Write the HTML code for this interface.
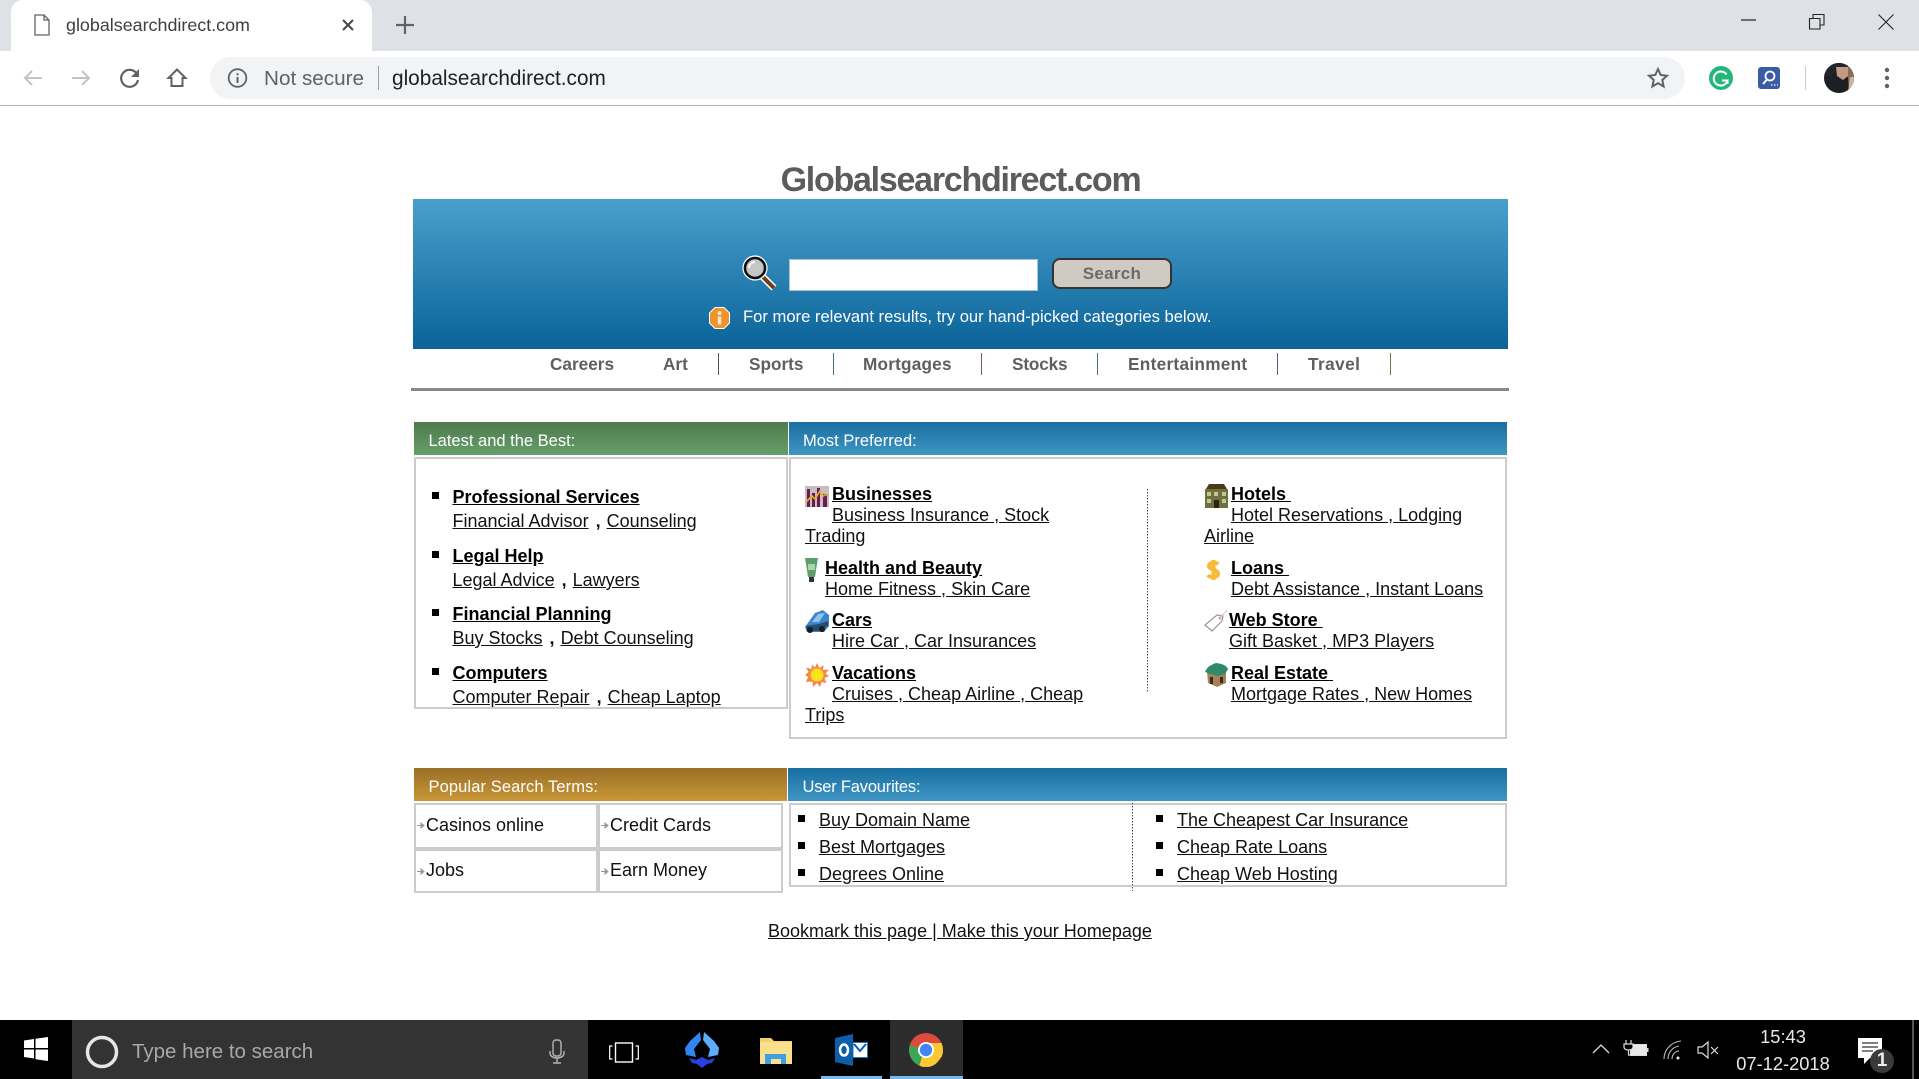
<!DOCTYPE html>
<html><head><meta charset="utf-8"><title>globalsearchdirect.com</title>
<style>
html,body{margin:0;padding:0;width:1919px;height:1079px;overflow:hidden;background:#fff;font-family:"Liberation Sans",sans-serif;color:#000}
.a{position:absolute}
.t{position:absolute;white-space:nowrap;line-height:20px;font-size:18px;color:#111}
.t a{color:#111;text-decoration:underline}
.b{font-weight:bold;color:#000}
.b a{color:#000}
.c{margin:0 6px 0 7px;font-weight:bold}
.hd{position:absolute;height:33px;line-height:39px;color:#fff;font-size:16.5px;box-sizing:border-box;padding-left:14.5px}
.box{position:absolute;box-sizing:border-box;border:2px solid #ccc;background:#fff}
.sq{position:absolute;width:7px;height:7px;background:#000}
.nav{position:absolute;top:354px;line-height:21px;font-size:17.2px;font-weight:bold;color:#5f5f5f;white-space:nowrap}
.sp{position:absolute;top:353px;width:1px;height:22px;background:#555}
.dot{position:absolute;width:1px;background:repeating-linear-gradient(#444 0 1.5px,#fff 1.5px 3px)}
svg{position:absolute;overflow:visible}
</style></head><body>

<!-- browser chrome -->
<div class="a" style="left:0;top:0;width:1919px;height:51px;background:#dee1e6"></div>
<div class="a" style="left:11px;top:0;width:361px;height:51px;background:#fff;border-radius:12px 12px 0 0"></div>
<div class="a" style="left:0;top:51px;width:1919px;height:54px;background:#fff"></div>
<div class="a" style="left:0;top:105px;width:1919px;height:1px;background:#b4b4b4"></div>
<svg style="left:34px;top:14px" width="16" height="22" viewBox="0 0 16 22"><path d="M1 1h9l5 5v15H1z M10 1v5h5" fill="#fff" stroke="#5f6368" stroke-width="1.3"/></svg>
<div class="t" style="left:66px;top:15px;font-size:17.9px;color:#3c4043">globalsearchdirect.com</div>
<svg style="left:342px;top:19px" width="12" height="12" viewBox="0 0 12 12"><path d="M1 1l10 10M11 1L1 11" stroke="#444" stroke-width="2"/></svg>
<svg style="left:396px;top:16px" width="18" height="18" viewBox="0 0 18 18"><path d="M9 0v18M0 9h18" stroke="#5f6368" stroke-width="2.2"/></svg>
<svg style="left:1741px;top:19px" width="16" height="2"><path d="M0 1h15" stroke="#222" stroke-width="1.2"/></svg>
<svg style="left:1809px;top:14px" width="16" height="16" viewBox="0 0 16 16"><path d="M.5 4.5h10.5v10.500H.5z M4 4.500V.5h11v10.500h-4" fill="none" stroke="#222" stroke-width="1.1"/></svg>
<svg style="left:1878px;top:14px" width="16" height="16" viewBox="0 0 16 16"><path d="M.5.5l15 15M15.500.5l-15 15" stroke="#222" stroke-width="1.1"/></svg>

<svg style="left:22px;top:68px" width="22" height="20" viewBox="0 0 22 20"><path d="M20 10H3M10 3l-7 7 7 7" fill="none" stroke="#c1c3c6" stroke-width="2"/></svg>
<svg style="left:70px;top:68px" width="22" height="20" viewBox="0 0 22 20"><path d="M2 10h17M12 3l7 7-7 7" fill="none" stroke="#c1c3c6" stroke-width="2"/></svg>
<svg style="left:119px;top:67px" width="22" height="22" viewBox="0 0 22 22"><path d="M18 7A8.500 8.500 0 1 0 19 13" fill="none" stroke="#5f6368" stroke-width="2.200"/><path d="M20 2v8h-8z" fill="#5f6368"/></svg>
<svg style="left:167px;top:68px" width="20" height="20" viewBox="0 0 20 20"><path d="M10 1.500L1.500 10H4.500v8h11v-8h3z" fill="none" stroke="#5f6368" stroke-width="2"/></svg>

<div class="a" style="left:210px;top:57px;width:1475px;height:42px;background:#f1f3f4;border-radius:21px"></div>
<svg style="left:227px;top:68px" width="21" height="21" viewBox="0 0 21 21"><circle cx="10.500" cy="10" r="8.800" fill="none" stroke="#5f6368" stroke-width="1.800"/><path d="M10.500 9v6M10.500 5.200v2" stroke="#5f6368" stroke-width="2"/></svg>
<div class="t" style="left:264px;top:69px;font-size:20.700px;color:#5f6368">Not secure</div>
<div class="a" style="left:378px;top:66px;width:1px;height:24px;background:#9aa0a6"></div>
<div class="t" style="left:392px;top:69px;font-size:20.800px;color:#202124">globalsearchdirect.com</div>
<svg style="left:1647px;top:67px" width="22" height="22" viewBox="0 0 22 22"><path d="M11 2l2.700 6 6.300.7-4.700 4.300 1.300 6.500L11 16.200 5.400 19.500 6.700 13 2 8.700 8.300 8z" fill="none" stroke="#5f6368" stroke-width="2"/></svg>
<svg style="left:1709px;top:66px" width="24" height="24" viewBox="0 0 24 24"><circle cx="12" cy="12" r="12" fill="#25b67a"/><path d="M17.500 8.500A7 7 0 1 0 18.500 14.500H13M18.500 14.500v3.500" fill="none" stroke="#fff" stroke-width="2"/></svg>
<svg style="left:1758px;top:67px" width="22" height="22" viewBox="0 0 22 22"><rect width="22" height="22" rx="3" fill="#3c5ba6"/><circle cx="12" cy="9" r="4.500" fill="none" stroke="#fff" stroke-width="1.800"/><path d="M9 12.500L5 17" stroke="#fff" stroke-width="2"/><path d="M13 18h1.500M16 18h1.500M19 18h1" stroke="#d8e0f0" stroke-width="1.500"/></svg>
<div class="a" style="left:1805px;top:66px;width:1px;height:24px;background:#ccc"></div>
<svg style="left:1824px;top:63px" width="30" height="30" viewBox="0 0 30 30"><defs><clipPath id="av"><circle cx="15" cy="15" r="15"/></clipPath></defs><g clip-path="url(#av)"><rect width="30" height="30" fill="#1c2024"/><path d="M10 0h14l6 12v18h-5l-1-16-6-2z" fill="#8a6a58"/><path d="M12 4h12v9l-5 4-6-4z" fill="#c49a82"/><path d="M26 14h4v16h-6z" fill="#c9b49c"/><path d="M8 0h16v4H12L8 14 0 12z" fill="#20262a"/></g></svg>
<svg style="left:1884px;top:67px" width="6" height="22" viewBox="0 0 6 22"><circle cx="3" cy="3" r="2.200" fill="#5f6368"/><circle cx="3" cy="11" r="2.200" fill="#5f6368"/><circle cx="3" cy="19" r="2.200" fill="#5f6368"/></svg>

<!-- title and banner -->
<div class="t" style="left:0;width:1921px;text-align:center;top:160px;line-height:40px;font-size:34px;font-weight:bold;letter-spacing:-1.25px;color:#5c5c5c">Globalsearchdirect.com</div>
<div class="a" style="left:413px;top:199px;width:1095px;height:150px;background:linear-gradient(#4a9fcc,#0a6399)"></div>
<svg style="left:743px;top:256px" width="36" height="34" viewBox="0 0 36 34"><path d="M19 20l12 12" stroke="#fff" stroke-width="7"/><path d="M20 21l11 11" stroke="#6b3f1d" stroke-width="4"/><circle cx="12" cy="12" r="10" fill="#c6c6c6" stroke="#111" stroke-width="2.500"/><circle cx="12" cy="12" r="12" fill="none" stroke="#fff" stroke-width="1.200"/><path d="M6 12a6 6 0 0 1 6-6" stroke="#f4f4f4" stroke-width="2" fill="none"/></svg>
<div class="a" style="left:789px;top:259px;width:249px;height:32px;box-sizing:border-box;background:#fff;border:1px solid #a9c4d4"></div>
<div class="a" style="left:1052px;top:258px;width:120px;height:31px;box-sizing:border-box;background:#cfcac2;border:2px solid #333;border-radius:8px;text-align:center;line-height:28px;font-size:17px;font-weight:bold;color:#6a6a6a;letter-spacing:.3px">Search</div>
<svg style="left:709px;top:307px" width="21" height="22" viewBox="0 0 21 22"><path d="M6 .5h9L20.500 6v10L15 21.500H6L.5 16V6z" fill="#f0932b" stroke="#fff" stroke-width="1"/><circle cx="10.500" cy="6" r="2" fill="#fbe9cf"/><path d="M10.500 9.500v8" stroke="#fbe9cf" stroke-width="3.500"/></svg>
<div class="t" style="left:743px;top:307px;font-size:16.600px;color:#fff">For more relevant results, try our hand-picked categories below.</div>

<!-- nav -->
<div class="nav" style="left:550px">Careers</div>
<div class="nav" style="left:663px">Art</div>
<div class="sp" style="left:718px"></div>
<div class="nav" style="left:749px">Sports</div>
<div class="sp" style="left:833px;background:#3d6f7c"></div>
<div class="nav" style="left:863px;letter-spacing:.2px">Mortgages</div>
<div class="sp" style="left:981px;background:#7c5a4d"></div>
<div class="nav" style="left:1012px;letter-spacing:-.15px">Stocks</div>
<div class="sp" style="left:1097px;background:#3d6f7c"></div>
<div class="nav" style="left:1128px;letter-spacing:.3px">Entertainment</div>
<div class="sp" style="left:1277px;background:#4d5f7c"></div>
<div class="nav" style="left:1308px;letter-spacing:.45px">Travel</div>
<div class="sp" style="left:1390px;background:#6f7c3d"></div>
<div class="a" style="left:411px;top:388px;width:1098px;height:3px;background:#888"></div>

<!-- section one -->
<div class="hd" style="left:414px;top:422px;width:374px;background:linear-gradient(#4e7a4c,#659f6a)">Latest and the Best:</div>
<div class="hd" style="left:789px;top:422px;width:718px;padding-left:14px;background:linear-gradient(#186ea0,#3f96c4)">Most Preferred:</div>
<div class="box" style="left:414px;top:457px;width:374px;height:252px"></div>
<div class="box" style="left:789px;top:457px;width:718px;height:282px"></div>

<div class="sq" style="left:432px;top:492px"></div>
<div class="t b" style="left:452.5px;top:487px"><a href="#">Professional Services</a></div>
<div class="t" style="left:452.5px;top:511px"><a href="#">Financial Advisor</a><span class="c">,</span><a href="#">Counseling</a></div>
<div class="sq" style="left:432px;top:551px"></div>
<div class="t b" style="left:452.5px;top:546px"><a href="#">Legal Help</a></div>
<div class="t" style="left:452.5px;top:570px"><a href="#">Legal Advice</a><span class="c">,</span><a href="#">Lawyers</a></div>
<div class="sq" style="left:432px;top:609px"></div>
<div class="t b" style="left:452.5px;top:604px"><a href="#">Financial Planning</a></div>
<div class="t" style="left:452.5px;top:628px"><a href="#">Buy Stocks</a><span class="c">,</span><a href="#">Debt Counseling</a></div>
<div class="sq" style="left:432px;top:668px"></div>
<div class="t b" style="left:452.5px;top:663px"><a href="#">Computers</a></div>
<div class="t" style="left:452.5px;top:687px"><a href="#">Computer Repair</a><span class="c">,</span><a href="#">Cheap Laptop</a></div>

<!-- preferred left -->
<svg style="left:805px;top:485px" width="24" height="22" viewBox="0 0 24 22"><rect y="1" width="24" height="21" fill="#c8bcc4"/><path d="M2 4h3v18H2zM7 8h3v14H7zM12 3h3v19h-3zM18 9h4v13h-4z" fill="#6d1a4e"/><path d="M1 17l6-6 3 3 5-8 3 5 5-2" fill="none" stroke="#e6b422" stroke-width="1.600"/></svg>
<div class="t b" style="left:832px;top:484px"><a href="#">Businesses</a></div>
<div class="t" style="left:832px;top:505px"><a href="#">Business Insurance&nbsp;</a>,<a href="#">&nbsp;Stock</a></div>
<div class="t" style="left:805px;top:526px"><a href="#">Trading</a></div>

<svg style="left:805px;top:558px" width="13" height="24" viewBox="0 0 13 24"><path d="M0 0h13l-1 6-2 13H3L1 6z" fill="#5c9e6a"/><path d="M3 6h7v6H3z" fill="#a9d2b2"/><rect x="4" y="19" width="5" height="5" fill="#333"/></svg>
<div class="t b" style="left:825px;top:558px"><a href="#">Health and Beauty</a></div>
<div class="t" style="left:825px;top:579px"><a href="#">Home Fitness&nbsp;</a>,<a href="#">&nbsp;Skin Care</a></div>

<svg style="left:805px;top:610px" width="24" height="23" viewBox="0 0 24 23"><path d="M0 17L10 3l8-3 6 5v11l-5 6H2z" fill="#3a86c8"/><path d="M7 12l6-8 7-1-6 9z" fill="#8cc4ec"/><path d="M1 16l13-2 9-3v5l-9 5H2z" fill="#274a6e"/><circle cx="5" cy="20" r="3" fill="#1c1c1c"/><circle cx="17" cy="19" r="3" fill="#1c1c1c"/></svg>
<div class="t b" style="left:832px;top:610px"><a href="#">Cars</a></div>
<div class="t" style="left:832px;top:631px"><a href="#">Hire Car&nbsp;</a>,<a href="#">&nbsp;Car Insurances</a></div>

<svg style="left:805px;top:663px" width="24" height="24" viewBox="0 0 24 24"><path d="M12 0l2.500 5 4-3-.5 5 6-.5-3.500 4 3.500 2.500-4.500 2 2 5-5-1-1.500 5-3-4-4 4-.5-5.500L1 19l2-5-3-2 3.500-3L1 4.500 6.500 6 7 1.500l3 3z" fill="#f4874c"/><circle cx="12" cy="12" r="6.500" fill="#ffe21a"/></svg>
<div class="t b" style="left:832px;top:663px"><a href="#">Vacations</a></div>
<div class="t" style="left:832px;top:684px"><a href="#">Cruises&nbsp;</a>,<a href="#">&nbsp;Cheap Airline&nbsp;</a>,<a href="#">&nbsp;Cheap</a></div>
<div class="t" style="left:805px;top:705px"><a href="#">Trips</a></div>

<div class="dot" style="left:1147px;top:489px;height:204px"></div>

<!-- preferred right -->
<svg style="left:1204px;top:484px" width="25" height="24" viewBox="0 0 25 24"><path d="M2 5L5 0h15l3 5z" fill="#4a3a1c"/><rect x="1" y="5" width="23" height="19" fill="#6f7040"/><path d="M3 8h4v4H3zM10 8h4v4h-4zM18 8h4v4h-4zM3 15h4v4H3zM18 15h4v4h-4z" fill="#c8c48e"/><rect x="10" y="16" width="5" height="8" fill="#2d2410"/></svg>
<div class="t b" style="left:1231px;top:484px"><a href="#">Hotels&nbsp;</a></div>
<div class="t" style="left:1231px;top:505px"><a href="#">Hotel Reservations&nbsp;</a>,<a href="#">&nbsp;Lodging</a></div>
<div class="t" style="left:1204px;top:526px"><a href="#">Airline</a></div>

<svg style="left:1206px;top:559px" width="14" height="22" viewBox="0 0 14 22"><path d="M12 5.500C10 3 3 3 3 7c0 4 9 3 9 8 0 4-8 4-10 1M7.500 1v20" fill="none" stroke="#fbb45a" stroke-width="4"/><path d="M12 5.500C10 3 3 3 3 7c0 4 9 3 9 8 0 4-8 4-10 1M7.500 1v20" fill="none" stroke="#f5c020" stroke-width="2"/></svg>
<div class="t b" style="left:1231px;top:558px"><a href="#">Loans&nbsp;</a></div>
<div class="t" style="left:1231px;top:579px"><a href="#">Debt Assistance&nbsp;</a>,<a href="#">&nbsp;Instant Loans</a></div>

<svg style="left:1203px;top:610px" width="25" height="22" viewBox="0 0 25 22"><path d="M2 15L14 5l6 1-1 5-10 10z" fill="#fff" stroke="#999" stroke-width="1.200"/><circle cx="17" cy="8" r="1.500" fill="#e8a070"/><path d="M17 8L24 0" stroke="#ccc" stroke-width="1"/></svg>
<div class="t b" style="left:1229px;top:610px"><a href="#">Web Store&nbsp;</a></div>
<div class="t" style="left:1229px;top:631px"><a href="#">Gift Basket&nbsp;</a>,<a href="#">&nbsp;MP3 Players</a></div>

<svg style="left:1205px;top:663px" width="23" height="24" viewBox="0 0 23 24"><path d="M2 8h19v12l-9 4-9-4z" fill="#a5805a"/><path d="M0 9Q2 3 11 0q10 1 12 6l-3 5-8 2z" fill="#2f8a6c"/><path d="M5 14h3v7H5zM15 14h3v6h-3z" fill="#3a2a18"/></svg>
<div class="t b" style="left:1231px;top:663px"><a href="#">Real Estate&nbsp;</a></div>
<div class="t" style="left:1231px;top:684px"><a href="#">Mortgage Rates&nbsp;</a>,<a href="#">&nbsp;New Homes</a></div>

<!-- section two -->
<div class="hd" style="left:414px;top:768px;width:373px;letter-spacing:.1px;background:linear-gradient(#9a7028,#c99636)">Popular Search Terms:</div>
<div class="hd" style="left:788px;top:768px;width:719px;letter-spacing:-.2px;background:linear-gradient(#186ea0,#3f96c4)">User Favourites:</div>
<div class="box" style="left:414px;top:803px;width:184px;height:46px"></div>
<div class="box" style="left:598px;top:803px;width:185px;height:46px"></div>
<div class="box" style="left:414px;top:849px;width:184px;height:44px"></div>
<div class="box" style="left:598px;top:849px;width:185px;height:44px"></div>
<svg style="left:417px;top:822px" width="9" height="7"><path d="M0 3.500h6M4 1l3 2.500L4 6z" fill="#999" stroke="#999"/></svg>
<svg style="left:601px;top:822px" width="9" height="7"><path d="M0 3.500h6M4 1l3 2.500L4 6z" fill="#999" stroke="#999"/></svg>
<svg style="left:417px;top:868px" width="9" height="7"><path d="M0 3.500h6M4 1l3 2.500L4 6z" fill="#999" stroke="#999"/></svg>
<svg style="left:601px;top:868px" width="9" height="7"><path d="M0 3.500h6M4 1l3 2.500L4 6z" fill="#999" stroke="#999"/></svg>
<div class="t" style="left:426px;top:815px">Casinos online</div>
<div class="t" style="left:610px;top:815px">Credit Cards</div>
<div class="t" style="left:426px;top:860px">Jobs</div>
<div class="t" style="left:610px;top:860px">Earn Money</div>

<div class="box" style="left:789px;top:803px;width:718px;height:84px"></div>
<div class="dot" style="left:1132px;top:803px;height:88px"></div>
<div class="sq" style="left:798px;top:815px"></div>
<div class="t" style="left:819px;top:810px"><a href="#">Buy Domain Name</a></div>
<div class="sq" style="left:798px;top:842px"></div>
<div class="t" style="left:819px;top:837px"><a href="#">Best Mortgages</a></div>
<div class="sq" style="left:798px;top:869px"></div>
<div class="t" style="left:819px;top:864px"><a href="#">Degrees Online</a></div>
<div class="sq" style="left:1156px;top:815px"></div>
<div class="t" style="left:1177px;top:810px"><a href="#">The Cheapest Car Insurance</a></div>
<div class="sq" style="left:1156px;top:842px"></div>
<div class="t" style="left:1177px;top:837px"><a href="#">Cheap Rate Loans</a></div>
<div class="sq" style="left:1156px;top:869px"></div>
<div class="t" style="left:1177px;top:864px"><a href="#">Cheap Web Hosting</a></div>

<div class="t" style="left:768px;top:921px"><a href="#">Bookmark this page | Make this your Homepage</a></div>

<!-- taskbar -->
<div class="a" style="left:0;top:1020px;width:1919px;height:59px;background:#000"></div>
<div class="a" style="left:72px;top:1020px;width:516px;height:59px;background:#333"></div>
<svg style="left:24px;top:1037px" width="24" height="24" viewBox="0 0 24 24"><path d="M0 3.500L10 2v9H0zM11.500 1.800L24 0v11H11.500zM0 12.500h10v9L0 20zM11.500 12.500H24V24l-12.500-1.800z" fill="#fff"/></svg>
<svg style="left:85px;top:1035px" width="34" height="34" viewBox="0 0 34 34"><circle cx="17" cy="17" r="14.500" fill="none" stroke="#e6e6e6" stroke-width="3.500"/></svg>
<div class="t" style="left:132px;top:1042px;font-size:20.500px;color:#a8a8a8">Type here to search</div>
<svg style="left:548px;top:1039px" width="18" height="26" viewBox="0 0 18 26"><rect x="5" y="1" width="8" height="16" rx="3" fill="none" stroke="#b5b5b5" stroke-width="1.400"/><path d="M2 12v2c0 3 3 5 7 5s7-2 7-5v-2M9 19v5M5 24h8" fill="none" stroke="#b5b5b5" stroke-width="1.400"/></svg>
<svg style="left:609px;top:1042px" width="30" height="22" viewBox="0 0 30 22"><rect x="6.500" y="1" width="17" height="19" fill="none" stroke="#fff" stroke-width="1.400"/><path d="M3.500 4H.7v13h2.800M26.500 4h2.800v13h-2.800" fill="none" stroke="#fff" stroke-width="1.200"/></svg>

<svg style="left:685px;top:1032px" width="34" height="36" viewBox="0 0 34 36"><path d="M15 0L5 9 0 16l1 7 10 2-2-8 7-9z" fill="#2f86f0"/><path d="M19 0l10 9 5 7-1 7-10 2 2-8-7-9z" fill="#5aaef8"/><path d="M4 26l7 2 6-3 6 3 7-2-3 5-5 1-5 4-5-4-5-1z" fill="#2a3fe0"/></svg>
<svg style="left:760px;top:1038px" width="32" height="26" viewBox="0 0 32 26"><path d="M0 0h11l3 3h18v23H0z" fill="#f5cf6b"/><rect x="0" y="4" width="32" height="22" fill="#fbe08c"/><path d="M5 16h21v10h-5v-5H11v5H5z" fill="#3f9fe0"/></svg>
<svg style="left:835px;top:1034px" width="33" height="32" viewBox="0 0 33 32"><path d="M0 4L18 0v32L0 28z" fill="#0a5fa8"/><rect x="18" y="8" width="15" height="16" fill="#1e7ec8"/><path d="M18.500 9h13.500v14H18.500z" fill="#fff"/><path d="M19 10l6 7 6-7" fill="none" stroke="#0a5fa8" stroke-width="2"/><ellipse cx="9" cy="16" rx="4" ry="5.500" fill="none" stroke="#fff" stroke-width="2.600"/></svg>
<div class="a" style="left:821px;top:1076px;width:61px;height:3px;background:#76b9ed"></div>
<div class="a" style="left:890px;top:1020px;width:73px;height:59px;background:#2c2c2c"></div>
<div class="a" style="left:890px;top:1076px;width:73px;height:3px;background:#76b9ed"></div>
<svg style="left:909px;top:1033px" width="34" height="34" viewBox="0 0 34 34"><defs><clipPath id="ch"><circle cx="17" cy="17" r="17"/></clipPath></defs><g clip-path="url(#ch)"><rect width="34" height="34" fill="#dd4b3e"/><path d="M17 17L0 12V34H14z" fill="#3aa757"/><path d="M17 17L34 34H12z" fill="#3aa757"/><path d="M17 10h17v12L24 34H10z" fill="#fcc934"/></g><circle cx="17" cy="17" r="8" fill="#fff"/><circle cx="17" cy="17" r="6.200" fill="#4285f4"/></svg>

<svg style="left:1592px;top:1043px" width="18" height="11" viewBox="0 0 18 11"><path d="M1 10l8-8 8 8" fill="none" stroke="#ddd" stroke-width="1.300"/></svg>
<svg style="left:1623px;top:1040px" width="26" height="18" viewBox="0 0 26 18"><rect x="7.500" y="4.500" width="16" height="11" fill="#e8e8e8" stroke="#ddd"/><rect x="24" y="8" width="1.500" height="4" fill="#ddd"/><path d="M1 4h9v3c0 2-2 3-4.500 3S1 9 1 7z" fill="#000"/><path d="M3 0v4M8 0v4M1 4h9v3c0 2-2 3-4.500 3S1 9 1 7zM5.500 10v5h2" fill="none" stroke="#ddd" stroke-width="1.200"/></svg>
<svg style="left:1663px;top:1040px" width="20" height="20" viewBox="0 0 20 20"><path d="M1 19C1 10 8 2 18 1M5 19c0-7 5-12 11-13M9 19c0-4 3-8 7-8" fill="none" stroke="#bbb" stroke-width="1.100"/><circle cx="15" cy="18" r="1.500" fill="#eee"/></svg>
<svg style="left:1697px;top:1041px" width="22" height="18" viewBox="0 0 22 18"><path d="M1 6h4l6-5v16l-6-5H1z" fill="none" stroke="#ddd" stroke-width="1.200"/><path d="M14 6l7 7M21 6l-7 7" stroke="#ddd" stroke-width="1.200"/></svg>
<div class="t" style="left:1733px;width:100px;text-align:center;top:1027px;font-size:18.300px;color:#e8e8e8">15:43</div>
<div class="t" style="left:1723px;width:120px;text-align:center;top:1054px;font-size:18.300px;color:#e8e8e8">07-12-2018</div>
<svg style="left:1858px;top:1038px" width="38" height="38" viewBox="0 0 38 38"><path d="M0 0h24v20H12l-6 6v-6H0z" fill="#fff"/><path d="M4 5h16M4 9h16M4 13h11" stroke="#333" stroke-width="1.300"/><circle cx="24" cy="23" r="12" fill="#3a3a3a"/></svg>
<div class="t" style="left:1872px;width:20px;text-align:center;top:1051px;font-size:19px;font-weight:bold;color:#eee">1</div>
<div class="a" style="left:1912px;top:1020px;width:2px;height:59px;background:#555"></div>
</body></html>
